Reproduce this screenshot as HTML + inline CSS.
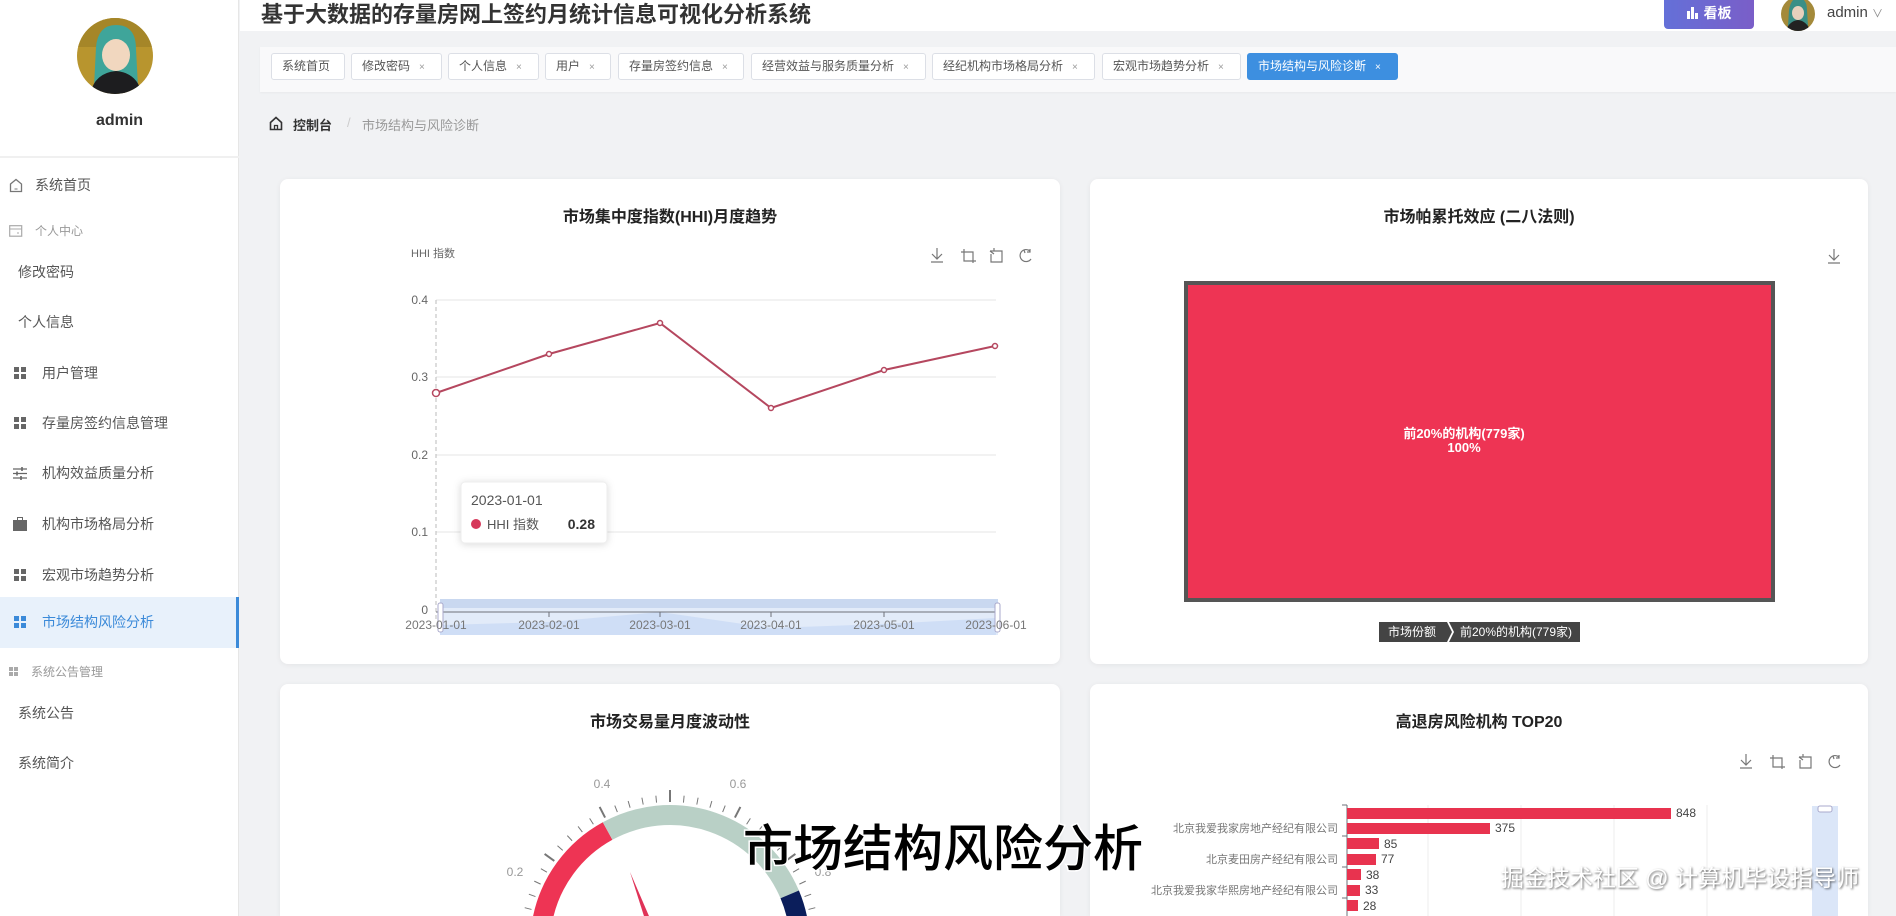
<!DOCTYPE html>
<html style="height:916px;overflow:hidden"><head><meta charset="utf-8">
<style>
*{margin:0;padding:0;box-sizing:border-box}
html,body{width:1896px;height:916px;overflow:hidden}
body{background:#f1f2f4;font-family:"Liberation Sans","Noto Sans CJK SC",sans-serif;position:relative;color:#333}
.a{position:absolute;white-space:nowrap}
#side{position:absolute;left:0;top:0;width:239px;height:916px;background:#fff;border-right:1px solid #e6e6e6}
.mi{position:absolute;left:0;width:239px;height:50px;line-height:50px;font-size:14px;color:#555}
.grp{font-size:12px;color:#999}
.g4{position:absolute;width:12px;height:12px}
.g4 i{position:absolute;width:5px;height:5px;background:#666}
.tab{position:absolute;top:53px;height:27px;line-height:25px;border:1px solid #dcdfe6;background:#fff;border-radius:3px;font-size:12px;color:#555;padding-left:10px}
.tab b{font-weight:normal;color:#999;font-size:10px;margin-left:9px}
.card{position:absolute;background:#fff;border-radius:8px;box-shadow:0 1px 6px rgba(0,0,0,.06)}
.ct{position:absolute;font-size:16px;font-weight:bold;color:#222;transform:translateX(-50%)}
</style></head><body>
<div id="side">
 <svg class="a" style="left:76px;top:17px" width="78" height="78" viewBox="0 0 78 78">
  <defs><clipPath id="c"><circle cx="39" cy="39" r="38"/></clipPath></defs>
  <g clip-path="url(#c)"><rect width="78" height="78" fill="#b8952e"/><rect x="0" y="0" width="78" height="30" fill="#a58628"/>
  <path d="M20 30 Q22 8 40 8 Q60 8 60 32 L62 70 L18 70Z" fill="#3fa59a"/>
  <ellipse cx="40" cy="38" rx="14" ry="16" fill="#f1d7bf"/>
  <path d="M14 78 Q18 56 40 54 Q62 56 66 78Z" fill="#1d1d1f"/></g>
 </svg>
 <div class="a" style="left:0;width:239px;text-align:center;top:112px;font-size:16px;font-weight:bold;color:#333">admin</div>
 <div class="a" style="left:0;top:156px;width:239px;height:2px;background:#f0f0f0"></div>
 <div class="mi" style="top:160px"><svg class="a" style="left:9px;top:18px" width="14" height="15" viewBox="0 0 14 15"><path d="M1.5 6 L7 1.5 L12.5 6 V13.5 H1.5Z" fill="none" stroke="#777" stroke-width="1.3"/><path d="M5.5 11h3" stroke="#777"/></svg><span class="a" style="left:35px">系统首页</span></div>
 <div class="mi grp" style="top:206px"><svg class="a" style="left:9px;top:19px" width="14" height="12"><rect x=".7" y=".7" width="12" height="10.5" fill="none" stroke="#aaa" stroke-width="1.2"/><path d="M1 4h12M8 8h2" stroke="#aaa"/></svg><span class="a" style="left:35px">个人中心</span></div>
 <div class="mi" style="top:247px"><span class="a" style="left:18px">修改密码</span></div>
 <div class="mi" style="top:297px"><span class="a" style="left:18px">个人信息</span></div>
 <div class="mi" style="top:348px"><div class="g4" style="left:14px;top:19px"><i style="left:0;top:0"></i><i style="left:7px;top:0"></i><i style="left:0;top:7px"></i><i style="left:7px;top:7px"></i></div><span class="a" style="left:42px">用户管理</span></div>
 <div class="mi" style="top:398px"><div class="g4" style="left:14px;top:19px"><i style="left:0;top:0"></i><i style="left:7px;top:0"></i><i style="left:0;top:7px"></i><i style="left:7px;top:7px"></i></div><span class="a" style="left:42px">存量房签约信息管理</span></div>
 <div class="mi" style="top:448px"><svg class="a" style="left:13px;top:19px" width="14" height="13"><path d="M0 2h14M0 6.5h14M0 11h14" stroke="#666" stroke-width="1.3"/><path d="M9 0v4M4 4.5v4M8 9v4" stroke="#666" stroke-width="1.6"/></svg><span class="a" style="left:42px">机构效益质量分析</span></div>
 <div class="mi" style="top:499px"><svg class="a" style="left:13px;top:18px" width="14" height="14"><rect x="4.5" y="0.5" width="5" height="3" fill="none" stroke="#666"/><rect x="0" y="3" width="14" height="11" fill="#666"/></svg><span class="a" style="left:42px">机构市场格局分析</span></div>
 <div class="mi" style="top:550px"><div class="g4" style="left:14px;top:19px"><i style="left:0;top:0"></i><i style="left:7px;top:0"></i><i style="left:0;top:7px"></i><i style="left:7px;top:7px"></i></div><span class="a" style="left:42px">宏观市场趋势分析</span></div>
 <div class="mi" style="top:597px;height:51px;background:#e8f1fb;border-right:3px solid #3b8ad9;color:#3b8ad9"><div class="g4" style="left:14px;top:19px"><i style="left:0;top:0;background:#3b8ad9"></i><i style="left:7px;top:0;background:#3b8ad9"></i><i style="left:0;top:7px;background:#3b8ad9"></i><i style="left:7px;top:7px;background:#3b8ad9"></i></div><span class="a" style="left:42px">市场结构风险分析</span></div>
 <div class="mi grp" style="top:647px"><div class="g4" style="left:9px;top:20px;width:9px;height:9px"><i style="left:0;top:0;width:4px;height:4px;background:#aaa"></i><i style="left:5px;top:0;width:4px;height:4px;background:#aaa"></i><i style="left:0;top:5px;width:4px;height:4px;background:#aaa"></i><i style="left:5px;top:5px;width:4px;height:4px;background:#aaa"></i></div><span class="a" style="left:31px">系统公告管理</span></div>
 <div class="mi" style="top:688px"><span class="a" style="left:18px">系统公告</span></div>
 <div class="mi" style="top:738px"><span class="a" style="left:18px">系统简介</span></div>
</div>

<div class="a" style="left:240px;top:0;width:1656px;height:31px;background:#fff"></div>
<div class="a" style="left:261px;top:1px;font-size:22px;font-weight:bold;color:#333;line-height:28px">基于大数据的存量房网上签约月统计信息可视化分析系统</div>
<div class="a" style="left:1664px;top:0;width:90px;height:29px;border-radius:0 0 4px 4px;background:linear-gradient(90deg,#6470d8,#7a5ec8);color:#fff;font-size:14px;font-weight:bold;line-height:27px;text-align:center"><svg style="vertical-align:-1px;margin-right:6px" width="11" height="12"><rect x="0" y="4" width="3" height="8" fill="#fff"/><rect x="4" y="0" width="3" height="12" fill="#fff"/><rect x="8" y="6" width="3" height="6" fill="#fff"/></svg>看板</div>
<svg class="a" style="left:1781px;top:-4px" width="34" height="36"><defs><clipPath id="c2"><circle cx="17" cy="18" r="17"/></clipPath></defs><g clip-path="url(#c2)"><rect width="34" height="36" fill="#a48a3a"/><path d="M8 14 Q10 2 17 2 Q26 2 26 14 L27 30 L7 30Z" fill="#3a8f86"/><ellipse cx="17" cy="17" rx="6" ry="7" fill="#e8d0bc"/><path d="M4 36 Q8 25 17 24 Q26 25 30 36Z" fill="#222"/></g></svg>
<div class="a" style="left:1827px;top:4px;font-size:15px;color:#444">admin <span style="font-size:11px;color:#888">∨</span></div>

<div class="a" style="left:260px;top:47px;width:1636px;height:45px;background:#f9f9fa;box-shadow:0 1px 2px rgba(0,0,0,.04)"></div>
<div class="tab" style="left:271px;width:74px">系统首页</div>
<div class="tab" style="left:351px;width:91px">修改密码<b>×</b></div>
<div class="tab" style="left:448px;width:91px">个人信息<b>×</b></div>
<div class="tab" style="left:545px;width:66px">用户<b>×</b></div>
<div class="tab" style="left:618px;width:126px">存量房签约信息<b>×</b></div>
<div class="tab" style="left:751px;width:175px">经营效益与服务质量分析<b>×</b></div>
<div class="tab" style="left:932px;width:163px">经纪机构市场格局分析<b>×</b></div>
<div class="tab" style="left:1102px;width:139px">宏观市场趋势分析<b>×</b></div>
<div class="tab" style="left:1247px;width:151px;background:#3d8fe0;border-color:#3d8fe0;color:#fff">市场结构与风险诊断<b style="color:#fff">×</b></div>

<svg class="a" style="left:269px;top:116px" width="14" height="15"><path d="M1.5 6.5 L7 1.5 L12.5 6.5 V13.5 H1.5Z" fill="none" stroke="#333" stroke-width="1.6"/><path d="M5.5 13.5v-4h3v4" fill="none" stroke="#333" stroke-width="1.3"/></svg>
<div class="a" style="left:293px;top:115px;font-size:13px;font-weight:bold;color:#333">控制台</div>
<div class="a" style="left:347px;top:115px;font-size:13px;color:#ccc">/</div>
<div class="a" style="left:362px;top:115px;font-size:13px;color:#999">市场结构与风险诊断</div>

<div class="card" style="left:280px;top:179px;width:780px;height:485px"></div>
<div class="card" style="left:1090px;top:179px;width:778px;height:485px"></div>
<div class="card" style="left:280px;top:684px;width:780px;height:232px;border-radius:8px 8px 0 0"></div>
<div class="card" style="left:1090px;top:684px;width:778px;height:232px;border-radius:8px 8px 0 0"></div>
<div class="ct" style="left:670px;top:203px">市场集中度指数(HHI)月度趋势</div>
<div class="ct" style="left:1479px;top:203px">市场帕累托效应 (二八法则)</div>
<div class="ct" style="left:670px;top:708px">市场交易量月度波动性</div>
<div class="ct" style="left:1479px;top:708px">高退房风险机构 TOP20</div>

<svg class="a" style="left:0;top:0" width="1896" height="916" font-family="Liberation Sans, Noto Sans CJK SC, sans-serif">
 <g id="tb" fill="none" stroke="#777" stroke-width="1.2">
  <path d="M937 248v11M932 254l5 5 5-5M931 262h12"/>
  <path d="M964 249v12h12M961 252h12v11"/>
  <path d="M990 251h4v-3M990 251l4 3M992 251h10v11h-11v-8"/>
  <path d="M1030 251a6 6 0 1 0 1 8M1024 250l1 3M1030 249v3h-3"/>
 </g>
 <use href="#tb" transform="translate(809,506)"/>
 <path d="M1834 249v11M1829 255l5 5 5-5M1828 263h12" fill="none" stroke="#777" stroke-width="1.2"/>
 <text x="411" y="257" font-size="11" fill="#666">HHI 指数</text>
 <g stroke="#e6e6e6"><line x1="436" y1="300" x2="996" y2="300"/><line x1="436" y1="377" x2="996" y2="377"/><line x1="436" y1="455" x2="996" y2="455"/><line x1="436" y1="532" x2="996" y2="532"/></g>
 <g font-size="12" fill="#666" text-anchor="end"><text x="428" y="304">0.4</text><text x="428" y="381">0.3</text><text x="428" y="459">0.2</text><text x="428" y="536">0.1</text><text x="428" y="614">0</text></g>
 <line x1="436" y1="300" x2="436" y2="620" stroke="#bbb" stroke-dasharray="4 3"/>
 <rect x="440" y="599" width="558" height="36" fill="#dbe6f8" opacity=".8"/>
 <rect x="440" y="599" width="558" height="9" fill="#c9d8f0"/>
 <path d="M440 625 L549 622 L660 612 L771 628 L884 624 L996 618 L996 635 L440 635Z" fill="#c8d9f5" opacity=".7"/>
 <line x1="436" y1="612" x2="996" y2="612" stroke="#6e7079"/>
 <g stroke="#6e7079"><line x1="549" y1="612" x2="549" y2="617"/><line x1="660" y1="612" x2="660" y2="617"/><line x1="771" y1="612" x2="771" y2="617"/><line x1="884" y1="612" x2="884" y2="617"/><line x1="996" y1="612" x2="996" y2="617"/></g>
 <rect x="438" y="603" width="5" height="29" rx="2" fill="#fff" stroke="#aac"/>
 <rect x="995" y="603" width="5" height="29" rx="2" fill="#fff" stroke="#aac"/>
 <g font-size="12" fill="#777" text-anchor="middle"><text x="436" y="629">2023-01-01</text><text x="549" y="629">2023-02-01</text><text x="660" y="629">2023-03-01</text><text x="771" y="629">2023-04-01</text><text x="884" y="629">2023-05-01</text><text x="996" y="629">2023-06-01</text></g>
 <polyline points="436,393 549,354 660,323 771,408 884,370 995,346" fill="none" stroke="#b5475f" stroke-width="2"/>
 <g fill="#fff" stroke="#b5475f" stroke-width="1.5"><circle cx="436" cy="393" r="3.5"/><circle cx="549" cy="354" r="2.5"/><circle cx="660" cy="323" r="2.5"/><circle cx="771" cy="408" r="2.5"/><circle cx="884" cy="370" r="2.5"/><circle cx="995" cy="346" r="2.5"/></g>
 <rect x="461" y="482" width="146" height="61" rx="4" fill="#fff" stroke="#eee" style="filter:drop-shadow(0 1px 4px rgba(0,0,0,.15))"/>
 <text x="471" y="505" font-size="14" fill="#555">2023-01-01</text>
 <circle cx="476" cy="524" r="5" fill="#d6385a"/>
 <text x="487" y="529" font-size="13" fill="#555">HHI 指数</text>
 <text x="595" y="529" font-size="14" font-weight="bold" fill="#333" text-anchor="end">0.28</text>
 <rect x="1186" y="283" width="587" height="317" fill="#ee3454" stroke="#555" stroke-width="4"/>
 <text x="1464" y="438" font-size="13" font-weight="bold" fill="#fff" text-anchor="middle">前20%的机构(779家)</text>
 <text x="1464" y="452" font-size="13" font-weight="bold" fill="#fff" text-anchor="middle">100%</text>
 <path d="M1379 622h68l5 10-5 10h-68Z" fill="#444"/>
 <path d="M1449 622h131v20h-131l5-10Z" fill="#444"/>
 <text x="1412" y="636" font-size="12" fill="#fff" text-anchor="middle">市场份额</text>
 <text x="1516" y="636" font-size="12" fill="#fff" text-anchor="middle">前20%的机构(779家)</text>
 <g id="ticks"></g>
 <path d="M578.1 1036.9 A130 130 0 0 1 607.6 831" fill="none" stroke="#ee3454" stroke-width="20"/>
 <path d="M607.6 831 A130 130 0 0 1 789.7 894.4" fill="none" stroke="#b9d0c6" stroke-width="20"/>
 <path d="M789.7 894.4 A130 130 0 0 1 761.9 1036.9" fill="none" stroke="#0b1e5b" stroke-width="20"/>
 <g font-size="12" fill="#999" text-anchor="middle"><text x="602" y="788">0.4</text><text x="738" y="788">0.6</text><text x="515" y="876">0.2</text><text x="823" y="876">0.8</text></g>
 <path d="M630 872 L655 930 L649 932Z" fill="#e03358"/>
 <g stroke="#eee"><line x1="1428" y1="805" x2="1428" y2="916"/><line x1="1521" y1="805" x2="1521" y2="916"/><line x1="1614" y1="805" x2="1614" y2="916"/><line x1="1707" y1="805" x2="1707" y2="916"/></g>
 <line x1="1347" y1="805" x2="1347" y2="916" stroke="#6e7079"/>
 <g stroke="#6e7079"><line x1="1342" y1="805" x2="1347" y2="805"/><line x1="1342" y1="836" x2="1347" y2="836"/><line x1="1342" y1="867" x2="1347" y2="867"/><line x1="1342" y1="898" x2="1347" y2="898"/></g>
 <g fill="#e8334f"><rect x="1347" y="808" width="324" height="11"/><rect x="1347" y="823" width="143" height="11"/><rect x="1347" y="838" width="32" height="11"/><rect x="1347" y="854" width="29" height="11"/><rect x="1347" y="869" width="14" height="11"/><rect x="1347" y="885" width="13" height="11"/><rect x="1347" y="900" width="11" height="11"/></g>
 <g font-size="12" fill="#444"><text x="1676" y="817">848</text><text x="1495" y="832">375</text><text x="1384" y="848">85</text><text x="1381" y="863">77</text><text x="1366" y="879">38</text><text x="1365" y="894">33</text><text x="1363" y="910">28</text></g>
 <g font-size="11" fill="#777" text-anchor="end"><text x="1338" y="832">北京我爱我家房地产经纪有限公司</text><text x="1338" y="863">北京麦田房产经纪有限公司</text><text x="1338" y="894">北京我爱我家华熙房地产经纪有限公司</text></g>
 <rect x="1812" y="806" width="26" height="110" fill="#dbe6f8"/>
 <rect x="1818" y="806" width="14" height="6" rx="2" fill="#fff" stroke="#aac"/>
 <text x="943" y="866" font-size="50" font-weight="500" fill="#000" text-anchor="middle" stroke="#fff" stroke-width="3" paint-order="stroke">市场结构风险分析</text>
 <text x="1680" y="886" font-size="23" fill="#fff" text-anchor="middle" style="filter:drop-shadow(1px 1px 1px rgba(0,0,0,.6))">掘金技术社区 @ 计算机毕设指导师</text>
</svg>
<script>
var g=document.getElementById('ticks'),s='';
for(var i=0;i<=50;i++){var v=i/50,a=(225-270*v)*Math.PI/180,maj=i%5==0,r1=143,r2=maj?155:150,cx=670,cy=945;
s+='<line x1="'+(cx+r1*Math.cos(a))+'" y1="'+(cy-r1*Math.sin(a))+'" x2="'+(cx+r2*Math.cos(a))+'" y2="'+(cy-r2*Math.sin(a))+'" stroke="#777" stroke-width="'+(maj?2:1)+'"/>';}
g.innerHTML=s;
</script>
</body></html>
